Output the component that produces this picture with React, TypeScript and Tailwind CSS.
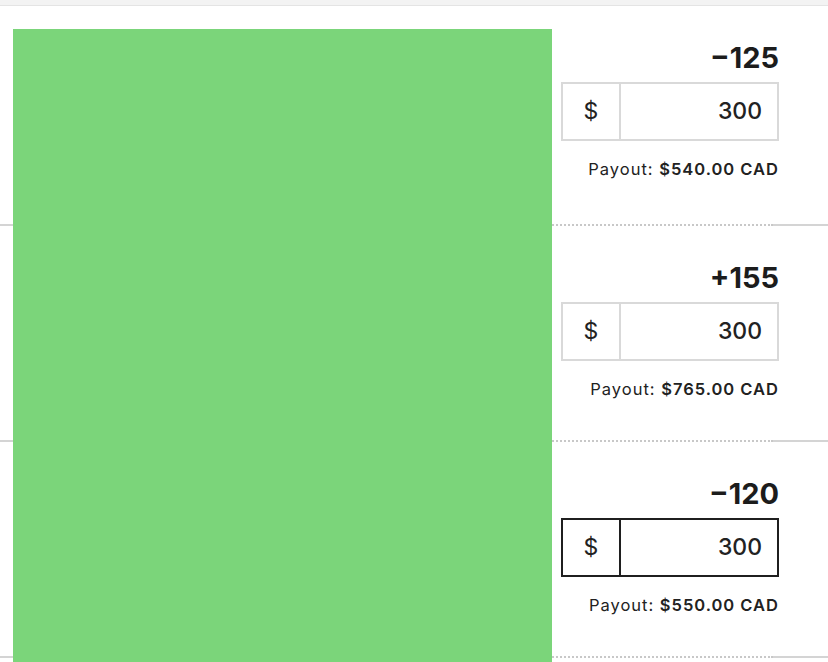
const rows = [
  { odds: '−125', payout: '$540.00 CAD', height: 'h-[220px]', focused: false },
  { odds: '+155', payout: '$765.00 CAD', height: 'h-[216px]', focused: false },
  { odds: '−120', payout: '$550.00 CAD', height: 'h-[216px]', focused: true },
]

function StakeInput({ focused }: { focused: boolean }) {
  const border = focused ? 'border-[#1f1f1f]' : 'border-[#d9d9d9]'

  return (
    <div className={`mt-[7px] flex h-[59px] w-[218px] border-2 ${border}`}>
      <div
        className={`flex w-[58px] shrink-0 items-center justify-center border-r-2 text-[23px] text-[#222] ${border}`}
      >
        $
      </div>
      <div className="flex flex-1 items-center justify-end pr-[15px] text-[23px] font-medium text-[#222]">
        300
      </div>
    </div>
  )
}

export default function App() {
  return (
    <div className="relative h-[662px] w-[828px] overflow-hidden bg-white font-['Inter',sans-serif]">
      <div className="h-[6px] border-b border-[#e4e4e4] bg-[#f3f3f3]" />
      {rows.map((row) => (
        <div key={row.odds} className={`flex flex-col ${row.height}`}>
          <div className="flex flex-1 justify-end pr-[49px] pt-[35px]">
            <div className="flex w-[218px] flex-col items-end">
              <div className="text-[29px] font-bold leading-[34px] text-[#1c1c1c]">
                {row.odds}
              </div>
              <StakeInput focused={row.focused} />
              <div className="mt-[18px] whitespace-nowrap text-[16.5px] leading-[20px] tracking-[0.06em] text-[#222]">
                Payout: <span className="font-semibold">{row.payout}</span>
              </div>
            </div>
          </div>
          <div className="flex h-[2px]">
            <div className="w-[13px] bg-[#d4d4d4]" />
            <div className="w-[760px] border-t-2 border-dotted border-[#c8c8c8]" />
            <div className="flex-1 bg-[#d4d4d4]" />
          </div>
        </div>
      ))}
      <div className="absolute bottom-0 left-[13px] top-[29px] w-[539px] bg-[#7bd57a]" />
    </div>
  )
}
